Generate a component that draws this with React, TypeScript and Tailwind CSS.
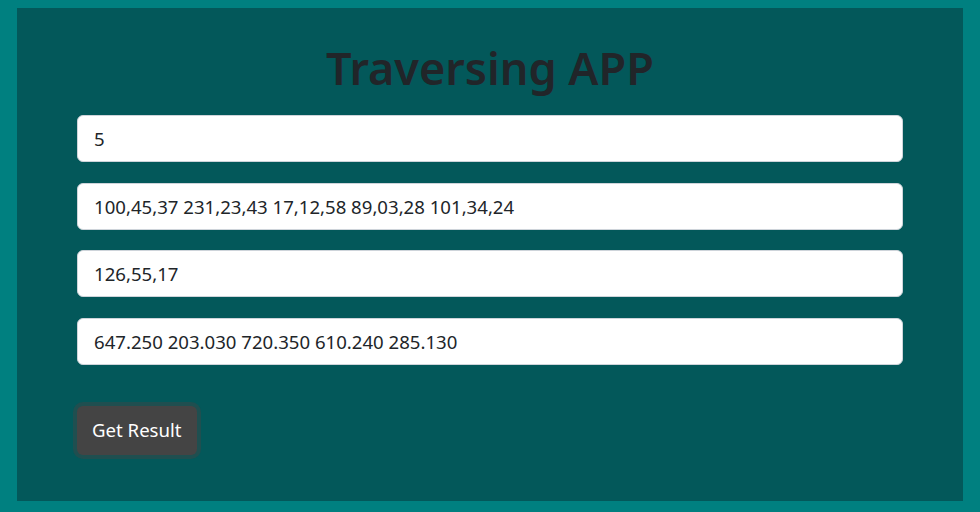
export default function App() {
  const fields = [
    "5",
    "100,45,37 231,23,43 17,12,58 89,03,28 101,34,24",
    "126,55,17",
    "647.250 203.030 720.350 610.240 285.130",
  ];

  return (
    <div className="h-[512px] w-[980px] bg-[#008080] pt-2 pb-[11px] px-[17px] font-['Noto_Sans',sans-serif]">
      <div className="h-full bg-[#03585a] px-[60px] pt-[30px]">
        {/* Titulek */}
        <h1 className="text-center text-[45px] font-semibold leading-[60px] text-[#212529]">
          Traversing APP
        </h1>

        {/* Vstupy */}
        <div className="mt-[17px] flex flex-col gap-[20.5px]">
          {fields.map((v, i) => (
            <input
              key={i}
              readOnly
              value={v}
              className="h-[47px] w-full rounded-[6px] border border-[#ced4da] bg-white px-4 text-[18.6px] text-[#212529] outline-none"
            />
          ))}
        </div>

        {/* Tlačítko */}
        <button className="mt-[41px] h-[49px] rounded-[6px] bg-[#444444] px-[15px] text-[18.6px] text-white shadow-[0_0_0_4px_rgba(60,70,70,0.5)]">
          Get Result
        </button>
      </div>
    </div>
  );
}
